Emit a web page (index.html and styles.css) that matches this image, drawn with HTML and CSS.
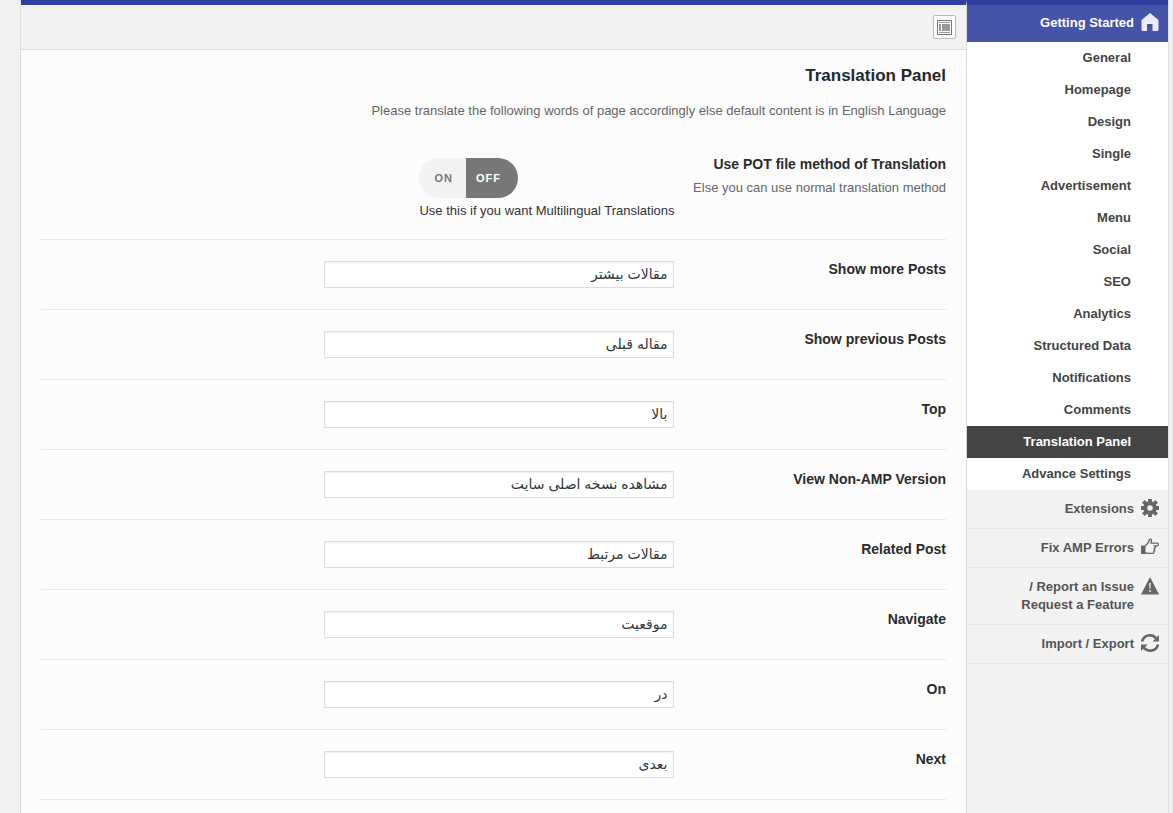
FILE: index.html
```
<!DOCTYPE html>
<html lang="en" dir="rtl">
<head>
    <meta charset="UTF-8">
    <meta name="viewport" content="width=device-width, initial-scale=1.0">
    <title>Translation Panel</title>
    <link rel="stylesheet" href="styles.css">
</head>
<body>
    <div class="panel">

        <!-- Sidebar menu -->
        <nav class="sidebar">
            <a class="group active" href="#">
                <svg class="icon" viewBox="0 0 18 18"><path fill="#ececf8" d="M9 0L.5 7v10q0 1 1 1H6v-7h5.500v7H16q1.500 0 1.500-1V7z"/></svg>
                <span>Getting Started</span>
            </a>
            <ul class="submenu">
                <li><a href="#">General</a></li>
                <li><a href="#">Homepage</a></li>
                <li><a href="#">Design</a></li>
                <li><a href="#">Single</a></li>
                <li><a href="#">Advertisement</a></li>
                <li><a href="#">Menu</a></li>
                <li><a href="#">Social</a></li>
                <li><a href="#">SEO</a></li>
                <li><a href="#">Analytics</a></li>
                <li><a href="#">Structured Data</a></li>
                <li><a href="#">Notifications</a></li>
                <li><a href="#">Comments</a></li>
                <li><a class="current" href="#">Translation Panel</a></li>
                <li><a href="#">Advance Settings</a></li>
            </ul>
            <a class="group" href="#">
                <svg class="icon" viewBox="0 0 18 18">
                    <g stroke="currentColor" stroke-width="3.800"><path d="M9 0v5M9 13v5M0 9h5M13 9h5M2.400 2.400l3.600 3.600M12 12l3.600 3.600M15.600 2.400L12 6M6 12l-3.600 3.600"/></g>
                    <circle cx="9" cy="9" r="4.800" fill="none" stroke="currentColor" stroke-width="4"/>
                </svg>
                <span>Extensions</span>
            </a>
            <a class="group" href="#">
                <svg class="icon" viewBox="0 0 18 18">
                    <path fill="currentColor" d="M0 7.500h4.500V16H0z"/>
                    <path fill="none" stroke="currentColor" stroke-width="1.300" stroke-linejoin="round" d="M4 8l3-3 1.500-3.500q1.700-1 2 .8L10 5.200h6.200q1.200.2 1.200 1.300t-1.200 1.400H13q1.500.4 1.300 1.500t-1.300 1.300q1 .3.800 1.300t-1.100 1.200q.6 2-1.200 2.200H7L4 14.600"/>
                </svg>
                <span>Fix AMP Errors</span>
            </a>
            <a class="group" href="#">
                <svg class="icon" viewBox="0 0 18 18">
                    <path fill="currentColor" d="M9 0l9 17.500H0z"/>
                    <path fill="#d8d2c4" d="M8 6h2l-.4 6H8.400zM8.100 13h1.800v2H8.100z"/>
                </svg>
                <span>Report an Issue /<br>Request a Feature</span>
            </a>
            <a class="group" href="#">
                <svg class="icon" viewBox="0 0 18 18">
                    <path fill="none" stroke="currentColor" stroke-width="2.600" d="M1 7.500C3 .5 11-.5 15.200 4.300M17 10.500C15 17.500 7 18.500 2.800 13.700"/>
                    <path fill="currentColor" d="M18 1v6.500h-6.500zM0 17v-6.500h6.500z"/>
                </svg>
                <span>Import / Export</span>
            </a>
        </nav>

        <!-- Main content area -->
        <main class="main">
            <div class="toolbar">
                <button class="expand-btn" type="button" aria-label="Expand options">
                    <svg viewBox="0 0 15 15" shape-rendering="crispEdges">
                        <path fill="none" stroke="#777" d="M.5.5h14v14H.5z"/>
                        <path fill="#999" d="M2 2h11v1H2zM2 4h2v7H2zM5 4h8v7H5zM2 12h11v1H2z"/>
                    </svg>
                </button>
            </div>

            <form class="content">
                <h2>Translation Panel</h2>
                <p class="intro">Please translate the following words of page accordingly else default content is in English Language</p>

                <div class="row first">
                    <div class="label">
                        Use POT file method of Translation
                        <span class="hint">Else you can use normal translation method</span>
                    </div>
                    <div class="switch-field">
                        <div class="switch" dir="ltr">
                            <button type="button" aria-pressed="false">ON</button>
                            <button class="selected" type="button" aria-pressed="true">OFF</button>
                        </div>
                        <div class="note">Use this if you want Multilingual Translations</div>
                    </div>
                </div>
                <div class="row">
                    <label class="label" for="show-more">Show more Posts</label>
                    <input type="text" id="show-more" value="مقالات بیشتر">
                </div>
                <div class="row">
                    <label class="label" for="show-previous">Show previous Posts</label>
                    <input type="text" id="show-previous" value="مقاله قبلی">
                </div>
                <div class="row">
                    <label class="label" for="top">Top</label>
                    <input type="text" id="top" value="بالا">
                </div>
                <div class="row">
                    <label class="label" for="non-amp">View Non-AMP Version</label>
                    <input type="text" id="non-amp" value="مشاهده نسخه اصلی سایت">
                </div>
                <div class="row">
                    <label class="label" for="related">Related Post</label>
                    <input type="text" id="related" value="مقالات مرتبط">
                </div>
                <div class="row">
                    <label class="label" for="navigate">Navigate</label>
                    <input type="text" id="navigate" value="موقعیت">
                </div>
                <div class="row">
                    <label class="label" for="on">On</label>
                    <input type="text" id="on" value="در">
                </div>
                <div class="row">
                    <label class="label" for="next">Next</label>
                    <input type="text" id="next" value="بعدی">
                </div>
            </form>
        </main>
    </div>
</body>
</html>
```
FILE: styles.css
```
* {
    box-sizing: border-box;
}

body {
    margin: 0;
    padding: 0 4px 0 20px;
    background-color: #f1f1f1;
    color: #333;
    font-family: "Liberation Sans", "DejaVu Sans", Arial, sans-serif;
    font-size: 13px;
    line-height: 18px;
}

.panel {
    display: flex;
    min-height: 100vh;
    background-color: #f2f2f2;
    border-left: 1px solid #dedede;
    border-right: 1px solid #dedede;
}

/* Sidebar */
.sidebar {
    flex: 0 0 202px;
    border-left: 1px solid #d8d8d8;
    font-weight: bold;
}

.sidebar,
.main {
    border-top: 5px solid #303f9f;
}

.sidebar a {
    color: #555;
    text-decoration: none;
}

.group {
    display: flex;
    gap: 7px;
    padding: 10px 9px;
    border-bottom: 1px solid #e7e7e7;
}

.sidebar .group.active {
    padding: 9px 9px 10px;
    border-bottom: none;
    background-color: #4553a8;
    color: #fff;
}

.icon {
    flex: none;
    width: 18px;
    height: 18px;
    margin-top: -1px;
    color: #666;
}

.submenu {
    margin: 0;
    padding: 0;
    list-style: none;
    background-color: #fff;
}

.sidebar .submenu a {
    display: block;
    padding: 7px 37px 7px 10px;
    color: #444;
}

.sidebar .submenu .current {
    background-color: #444;
    color: #fff;
}

/* Main content area */
.main {
    flex: 1;
    min-width: 0;
    background-color: #fcfcfc;
}

.toolbar {
    display: flex;
    padding: 10px;
    background-color: #f2f2f2;
    border-bottom: 1px solid #dedede;
}

.expand-btn {
    display: flex;
    align-items: center;
    justify-content: center;
    width: 23px;
    height: 24px;
    padding: 0;
    background-color: #fcfcfc;
    border: 1px solid #bbb;
    border-radius: 2px;
}

.expand-btn svg {
    width: 15px;
    height: 15px;
}

.content {
    padding: 16px 20px 0;
}

h2 {
    margin: 0 0 16px;
    color: #23282d;
    font-size: 17px;
    line-height: 20px;
}

.intro {
    margin: 0;
    color: #666;
}

/* Form rows */
.row {
    display: grid;
    grid-template-columns: 30% 1fr;
    align-items: start;
    padding: 21px 0;
    border-bottom: 1px solid #e7e7e7;
}

.row.first {
    padding: 38px 0 19px;
}

.label {
    color: #2b2b2b;
    font-size: 14px;
    font-weight: bold;
    line-height: 16px;
}

.row.first .label {
    line-height: 12px;
}

.hint {
    display: block;
    margin-top: 9px;
    color: #666;
    font-size: 13px;
    font-weight: normal;
    line-height: 18px;
}

.row input {
    width: 350px;
    height: 27px;
    margin-right: 1px;
    padding: 2px 5px 4px;
    background-color: #fff;
    border: 1px solid #ddd;
    box-shadow: inset 0 1px 2px rgba(0, 0, 0, 0.07);
    color: #32373c;
    font-family: inherit;
    font-size: 14px;
}

.switch-field {
    width: fit-content;
}

.switch {
    display: flex;
    width: fit-content;
    margin-right: auto;
    border-radius: 20px;
    overflow: hidden;
}

.switch button {
    height: 40px;
    padding: 0 13px 0 15px;
    background-color: #f2f2f2;
    border: none;
    color: #777;
    font-family: inherit;
    font-size: 11px;
    font-weight: bold;
    letter-spacing: 1px;
}

.switch .selected {
    padding: 0 17px 0 10px;
    background-color: #777;
    color: #fff;
}

.note {
    margin-top: 4px;
}
```
